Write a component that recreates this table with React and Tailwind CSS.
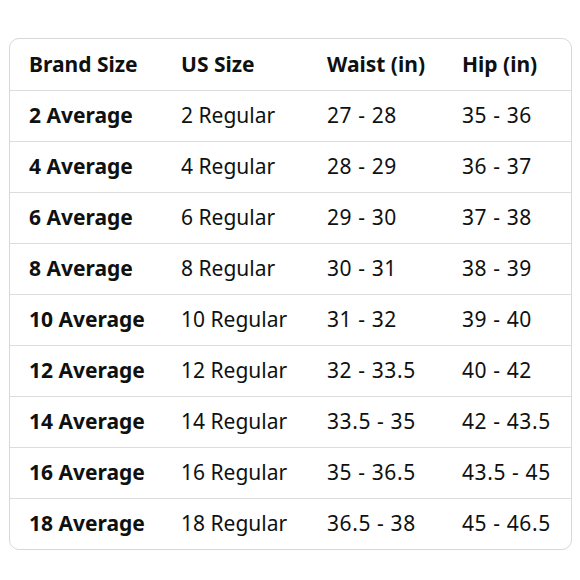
const rows = [
  ["2 Average", "2 Regular", "27 - 28", "35 - 36"],
  ["4 Average", "4 Regular", "28 - 29", "36 - 37"],
  ["6 Average", "6 Regular", "29 - 30", "37 - 38"],
  ["8 Average", "8 Regular", "30 - 31", "38 - 39"],
  ["10 Average", "10 Regular", "31 - 32", "39 - 40"],
  ["12 Average", "12 Regular", "32 - 33.5", "40 - 42"],
  ["14 Average", "14 Regular", "33.5 - 35", "42 - 43.5"],
  ["16 Average", "16 Regular", "35 - 36.5", "43.5 - 45"],
  ["18 Average", "18 Regular", "36.5 - 38", "45 - 46.5"],
];

const headers = ["Brand Size", "US Size", "Waist (in)", "Hip (in)"];

const cols = "grid grid-cols-[152px_146px_135px_1fr]";

const App = () => {
  return (
    <div className="w-[580px] h-[580px] bg-white pt-[38px] pl-[9px] font-['Noto_Sans',sans-serif] text-[#0f1111]">
      <div className="w-[563px] border border-[#d5d9d9] rounded-[10px] overflow-hidden">
        <div className={`${cols} h-[51px] items-center font-bold text-[21px]`}>
          {headers.map((h) => (
            <div key={h} className="pl-[19px]">{h}</div>
          ))}
        </div>
        {rows.map((row) => (
          <div key={row[0]} className={`${cols} h-[51px] items-center border-t border-[#dddddd] text-[21px]`}>
            {row.map((cell, i) => (
              <div
                key={i}
                className={`pl-[19px] ${i === 0 ? "font-bold" : ""} ${i > 1 ? "tracking-[0.6px]" : ""}`}
              >
                {cell}
              </div>
            ))}
          </div>
        ))}
      </div>
    </div>
  );
};

export default App;
